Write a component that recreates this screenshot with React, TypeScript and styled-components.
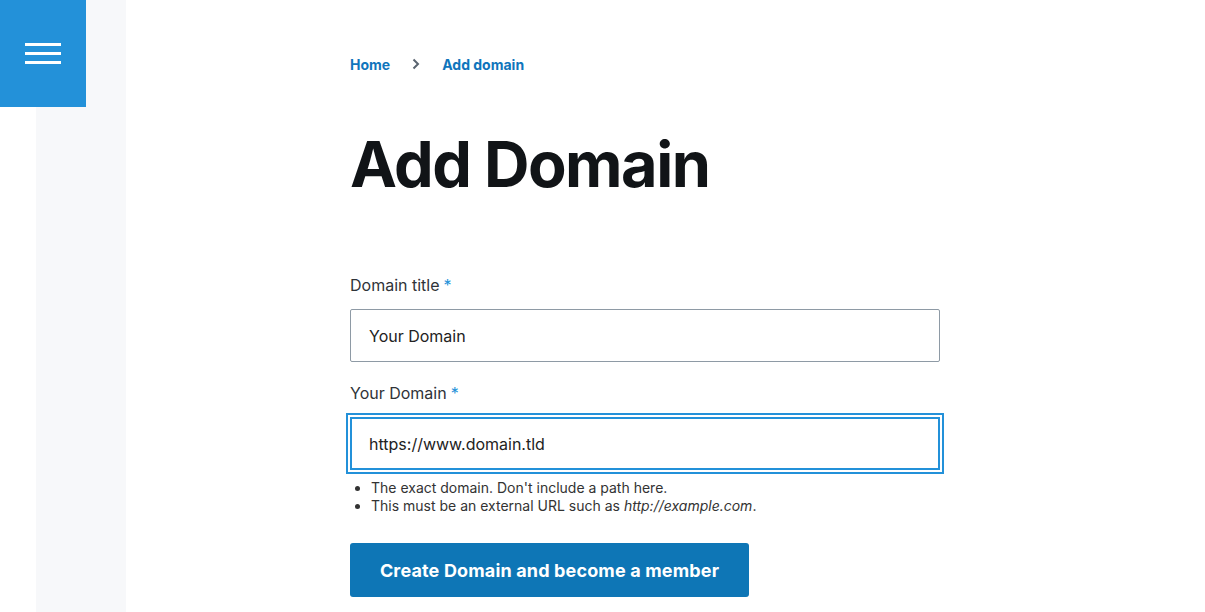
import React from "react";
import styled, { createGlobalStyle } from "styled-components";

const Global = createGlobalStyle`
  html, body { margin: 0; padding: 0; background: #fff; }
  body { font-family: Inter, "Open Sans", sans-serif; color: #222; }
  * { box-sizing: border-box; }
`;

const Page = styled.div`
  display: flex;
  min-height: 612px;
  position: relative;
`;

const SideGutter = styled.div`
  width: 36px;
  flex: none;
`;

const SideBar = styled.aside`
  width: 90px;
  flex: none;
  background: #f7f8fa;
`;

const MenuToggle = styled.button`
  position: absolute;
  left: 0;
  top: 0;
  width: 86px;
  height: 107px;
  border: 0;
  padding: 0;
  background: #2391d9;
  display: flex;
  flex-direction: column;
  align-items: center;
  justify-content: center;
  gap: 6px;
  cursor: pointer;
`;

const Bar = styled.span`
  display: block;
  width: 36px;
  height: 3px;
  background: #fff;
`;

const Main = styled.main`
  flex: 1;
  padding: 55px 0 0 224px;
`;

const Crumbs = styled.nav`
  display: flex;
  align-items: center;
  font-size: 14px;
  font-weight: 700;
  height: 18px;
`;

const Crumb = styled.a`
  color: #0f75bc;
  text-decoration: none;
`;

const Sep = styled.span`
  display: inline-flex;
  width: 52px;
  justify-content: center;
  color: #5a6470;
`;

const Title = styled.h1`
  margin: 51px 0 0 0;
  font-size: 63px;
  line-height: 80px;
  font-weight: 700;
  color: #111417;
  letter-spacing: -1.5px;
`;

const Form = styled.form`
  margin-top: 71px;
  width: 590px;
  display: flex;
  flex-direction: column;
`;

const Label = styled.label`
  display: block;
  font-size: 16px;
  color: #2f3338;
  line-height: 20px;
  margin-bottom: 14px;
`;

const Star = styled.span`
  color: #2391d9;
  margin-left: 4px;
`;

const Field = styled.div<{ $last?: boolean }>`
  margin-bottom: ${(p) => (p.$last ? "0" : "21px")};
`;

const Input = styled.input<{ $focused?: boolean }>`
  display: block;
  width: 100%;
  height: 53px;
  padding: 0 ${(p) => (p.$focused ? "17px" : "18px")};
  font-family: Inter, "Open Sans", sans-serif;
  font-size: 16px;
  color: #222;
  border: ${(p) => (p.$focused ? "2px solid #2391d9" : "1px solid #8e9aa5")};
  border-radius: ${(p) => (p.$focused ? "0" : "2px")};
  background: #fff;
  outline: none;
  box-shadow: ${(p) =>
    p.$focused ? "0 0 0 2px #fff, 0 0 0 4px #2391d9" : "none"};
`;

const Hints = styled.ul`
  margin: 9px 0 0 0;
  padding-left: 21px;
  font-size: 14px;
  line-height: 18px;
  color: #333;
`;

const Submit = styled.button`
  margin-top: 28px;
  align-self: flex-start;
  width: 399px;
  height: 54px;
  background: #0e76b6;
  border: 0;
  border-radius: 3px;
  color: #fff;
  font-family: Inter, "Open Sans", sans-serif;
  font-size: 18px;
  font-weight: 700;
  letter-spacing: 0.15px;
  cursor: pointer;
`;

export default function App() {
  return (
    <>
      <Global />
      <Page>
        <SideGutter />
        <SideBar />
        <MenuToggle aria-label="Menu">
          <Bar />
          <Bar />
          <Bar />
        </MenuToggle>
        <Main>
          <Crumbs>
            <Crumb href="#">Home</Crumb>
            <Sep>
              <svg width="8" height="12" viewBox="0 0 8 12">
                <path d="M1.5 1.5 L6 6 L1.5 10.5" fill="none" stroke="#5a6470" strokeWidth="2" />
              </svg>
            </Sep>
            <Crumb href="#">Add domain</Crumb>
          </Crumbs>
          <Title>Add Domain</Title>
          <Form onSubmit={(e) => e.preventDefault()}>
            <Field>
              <Label>
                Domain title<Star>*</Star>
              </Label>
              <Input defaultValue="Your Domain" />
            </Field>
            <Field $last>
              <Label>
                Your Domain<Star>*</Star>
              </Label>
              <Input $focused defaultValue="https://www.domain.tld" />
            </Field>
            <Hints>
              <li>The exact domain. Don't include a path here.</li>
              <li>
                This must be an external URL such as <em>http://example.com</em>.
              </li>
            </Hints>
            <Submit type="submit">Create Domain and become a member</Submit>
          </Form>
        </Main>
      </Page>
    </>
  );
}
